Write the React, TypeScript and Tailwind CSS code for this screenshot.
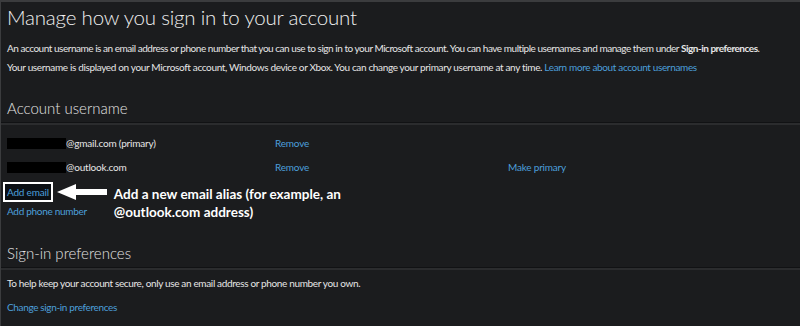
const LINK = "text-[#4c9fdb]";

function Divider() {
  return <div className="h-[3px] border-t border-[#111214] bg-[#2b2c2e] -ml-[7px]" />;
}

function LeftArrow() {
  return (
    <svg width="50" height="18" viewBox="0 0 50 18" className="block">
      <polygon points="0,9 19,1 19,6 50,6 50,12 19,12 19,17" fill="#ffffff" />
    </svg>
  );
}

function UsernameRow({ suffix, primary }: { suffix: string; primary?: boolean }) {
  return (
    <div className="flex h-5 items-center whitespace-nowrap text-[10px] tracking-[-0.2px] text-[#e6e6e6]">
      <div className="flex w-[268px] items-center">
        <span className="h-[11px] w-[59px] bg-black" />
        <span>{suffix}</span>
      </div>
      <div className="w-[233px]">
        <span className={LINK}>Remove</span>
      </div>
      {!primary && <span className={LINK}>Make primary</span>}
    </div>
  );
}

export default function App() {
  return (
    <div
      className="h-[326px] w-[800px] overflow-hidden border-t-2 border-l border-[#3b3c3e] bg-[#1b1c1e] pl-[6px] text-[#e6e6e6]"
      style={{ fontFamily: '"Segoe UI", Lato, "Open Sans", sans-serif' }}
    >
      <div className="flex h-[30px] items-center">
        <h1 className="text-[20.5px] font-light leading-none tracking-[-0.2px] text-[#f0f0f0]">
          Manage how you sign in to your account
        </h1>
      </div>

      <div className="mt-[7px] flex h-[18px] items-center whitespace-nowrap text-[10px] tracking-[-0.47px]">
        <p>
          An account username is an email address or phone number that you can use to sign in to your Microsoft
          account. You can have multiple usernames and manage them under <b className="font-bold">Sign-in preferences</b>.
        </p>
      </div>
      <div className="mt-px flex h-[18px] items-center whitespace-nowrap text-[10px] tracking-[-0.35px]">
        <p>
          Your username is displayed on your Microsoft account, Windows device or Xbox. You can change your primary
          username at any time. <span className={LINK}>Learn more about account usernames</span>
        </p>
      </div>

      <div className="mt-[22px] flex h-5 items-center">
        <h2 className="text-[15px] font-light text-[#e2e2e2]">Account username</h2>
      </div>
      <div className="mt-[4px]">
        <Divider />
      </div>

      <div className="mt-[8px]">
        <UsernameRow suffix="@gmail.com (primary)" primary />
      </div>
      <div className="mt-[4px]">
        <UsernameRow suffix="@outlook.com" />
      </div>

      <div className="mt-[5px] grid grid-cols-[auto_auto_1fr] grid-rows-[20px_18px] whitespace-nowrap">
        <div className="-ml-[4px] flex h-5 items-center border-2 border-white bg-[#0b0f14] px-[2px] text-[10px] tracking-[-0.2px]">
          <span className={LINK}>Add email</span>
        </div>
        <div className="ml-[4px] mt-[1px]">
          <LeftArrow />
        </div>
        <div className="row-span-2 ml-[7px] mt-[3px] text-[13.5px] font-bold leading-[18px] text-white">
          <div>Add a new email alias (for example, an</div>
          <div>@outlook.com address)</div>
        </div>
        <div className="col-span-2 flex h-[18px] items-center text-[10px] tracking-[-0.3px]">
          <span className={LINK}>Add phone number</span>
        </div>
      </div>

      <div className="mt-[23px] flex h-5 items-center">
        <h2 className="text-[15px] font-light text-[#e2e2e2]">Sign-in preferences</h2>
      </div>
      <div className="mt-[4px]">
        <Divider />
      </div>

      <div className="mt-[4px] flex h-[18px] items-center whitespace-nowrap text-[10px] tracking-[-0.35px]">
        <p>To help keep your account secure, only use an email address or phone number you own.</p>
      </div>
      <div className="mt-[6px] flex h-[18px] items-center text-[10px] tracking-[-0.35px]">
        <span className={LINK}>Change sign-in preferences</span>
      </div>
    </div>
  );
}
